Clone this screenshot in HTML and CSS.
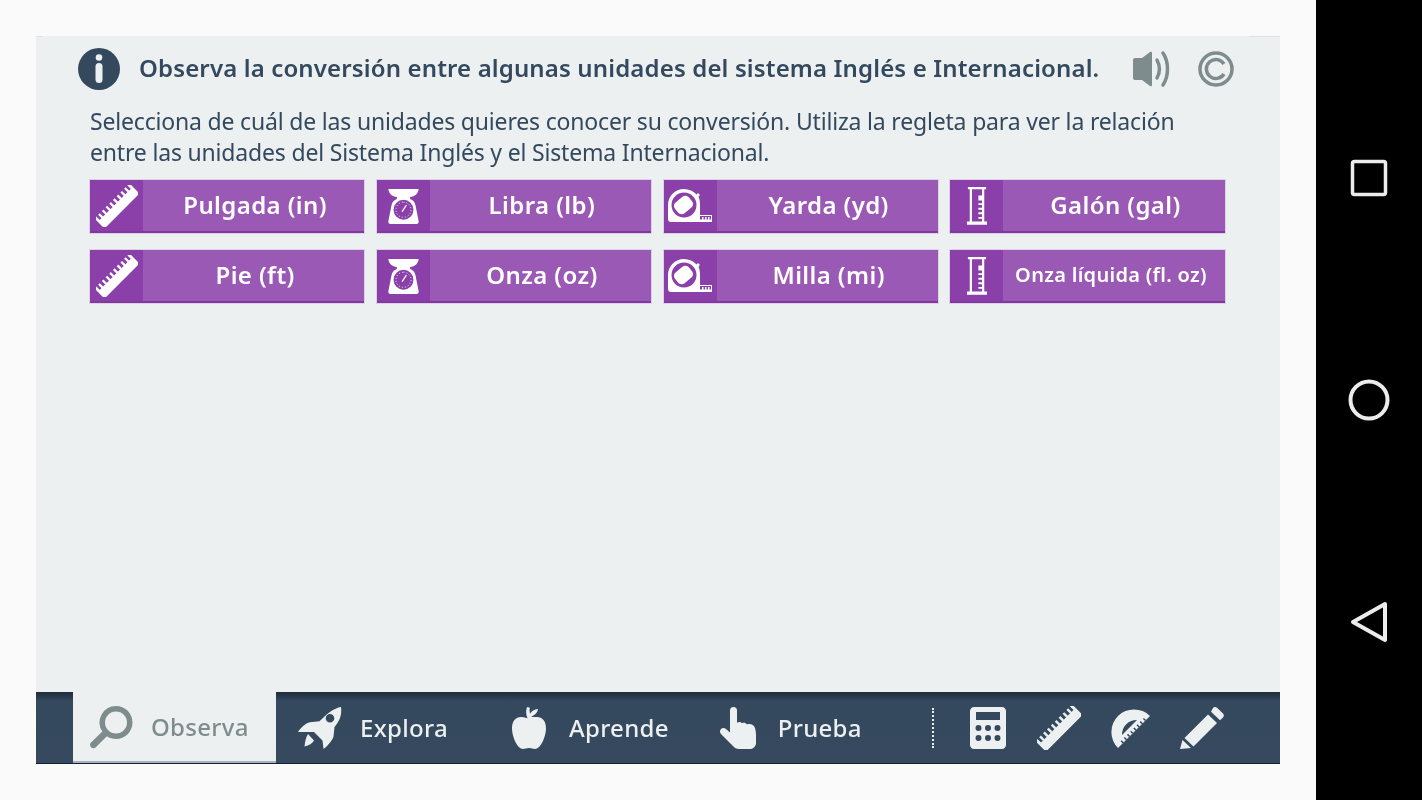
FILE: index.html
```html
<!DOCTYPE html>
<html lang="es">
<head>
<meta charset="utf-8">
<title>Observa</title>
<link rel="stylesheet" href="styles.css">
</head>
<body>
<svg class="defs" width="0" height="0" aria-hidden="true">
  <defs>
    <symbol id="ruler" viewBox="0 0 44 44">
      <g transform="rotate(-45 22 22)" fill="currentColor">
        <rect x="-4" y="19.500" width="52" height="10" rx="1"/>
        <rect x="-4" y="14.500" width="3" height="5.500"/><rect x="1.500" y="14.500" width="2.400" height="5.500"/>
        <rect x="7" y="14.500" width="2.400" height="5.500"/><rect x="12.500" y="14.500" width="2.400" height="5.500"/>
        <rect x="18" y="14.500" width="2.400" height="5.500"/><rect x="23.500" y="14.500" width="2.400" height="5.500"/>
        <rect x="29" y="14.500" width="2.400" height="5.500"/><rect x="34.500" y="14.500" width="2.400" height="5.500"/>
        <rect x="40" y="14.500" width="2.400" height="5.500"/><rect x="45" y="14.500" width="3" height="5.500"/>
      </g>
    </symbol>
    <symbol id="scale" viewBox="0 0 32 38">
      <path fill="currentColor" d="M0 1h32c-.6 5-4 8-9 8.500v2.200c3 1 5 3.200 5.600 6.300L32 35c.2 1.500-.6 3-2.500 3h-27C.6 38-.2 36.500 0 35l3.400-17c.6-3.100 2.600-5.300 5.600-6.300V9.500C4 9 .6 6 0 1z"/>
      <circle cx="16" cy="23" r="10.500" fill="#8a3fa9"/>
      <path fill="none" stroke="currentColor" stroke-width="1" stroke-dasharray="1 2.200" d="M16 15a8 8 0 1 1-.01 0z"/>
      <path fill="none" stroke="currentColor" stroke-width="1.300" d="M14.500 25l4.500-7"/>
    </symbol>
    <symbol id="tape" viewBox="0 0 44 34">
      <path fill="currentColor" fill-rule="evenodd" d="M16 0c5 0 9.500 2.200 12.500 5.500L30 4l2 2-1.500 1.500C31.500 10 32 13 32 16v10h12v7H3c-1.700 0-3-1.300-3-3V16C0 7 7 0 16 0zm0 3.500C9 3.500 3.500 9 3.500 16S9 28.500 16 28.500 28.500 23 28.500 16 23 3.500 16 3.500z"/>
      <rect x="6.500" y="9" width="18" height="14" rx="4.500" transform="rotate(-40 15.500 16)" fill="currentColor"/>
      <path fill="#8a3fa9" d="M32 27h11v3.500h-1.500V28h-1.500v2.500h-1.500V28H37v2.500h-1.500V28H34v2.500h-2z"/>
    </symbol>
    <symbol id="cylinder" viewBox="0 0 22 42">
      <path fill="currentColor" fill-rule="evenodd" d="M1 0h20v2.500h-2V38h3v3.500H0V38h3V2.500H1zm4.500 2.500V38h11v-3h-4v-2h4v-3h-4v-2h4v-3h-4v-2h4v-3h-4v-2h4v-3h-4V9.500h4V2.500z"/>
    </symbol>
    <symbol id="search" viewBox="0 0 44 44">
      <path fill="currentColor" fill-rule="evenodd" d="M27 1a16.500 16.500 0 0 1 0 33c-3.400 0-6.500-1-9.100-2.800L6.800 42.300c-1.300 1.300-3.500 1.300-4.800 0s-1.300-3.400 0-4.700l11.300-11A16.500 16.500 0 0 1 27 1zm0 5.500a11 11 0 1 0 0 22 11 11 0 0 0 0-22z"/>
    </symbol>
    <symbol id="rocket" viewBox="0 0 44 42">
      <path fill="currentColor" fill-rule="evenodd" d="M43 0c1 7-.8 13.500-6.500 20l-1 9.500c-.2 2-4.500 8.500-10 12.500l-1-8.500-8.500-8.500L0 25c4-6 9.500-9.500 12-9.700l9.500-1C28.500 7 36 1 43 0zM32 7a4.300 4.300 0 1 0 0 8.600A4.300 4.300 0 0 0 32 7z"/>
      <path fill="currentColor" d="M10 27l6 6.500c-1.500 3-5 5-9.500 6 .5-5 1.500-9.500 3.500-12.500z"/>
    </symbol>
    <symbol id="apple" viewBox="0 0 34 42">
      <path fill="currentColor" d="M15 0l3 .8c-.8 2.200-.5 4 .2 6 1-2.500 3.500-4.300 7.800-4.800-.4 3.400-2.800 6.400-7 7.400 1.500.4 3 .8 5 .6C30 9.500 34 14 34 21c0 9-5.500 21-11 21-2 0-3.500-1-6-1s-4 1-6 1C5.500 42 0 30 0 21c0-7 4-11.500 10-11 2 .2 3.500.6 5.500 1.200-1.600-3.500-1.800-7.200-.5-11.200z"/>
    </symbol>
    <symbol id="hand" viewBox="0 0 36 42">
      <path fill="currentColor" d="M10 3.500a3.500 3.500 0 0 1 7 0v12.200c1.800-1.200 3.800-1 5 .5 1.800-.8 3.800-.4 5 1.200 3.400-1 7 .5 8 3.600.6 2 1 5 1 7.500V36c0 3.300-2.700 6-6 6H19c-2.500 0-4.500-1-6-3L1 27c-1.500-1.500-1.300-3.700 0-5 1.400-1.400 3.500-1.400 5 0l4 3.500z"/>
    </symbol>
    <symbol id="calc" viewBox="0 0 36 42">
      <path fill="currentColor" fill-rule="evenodd" d="M4 0h28c2.200 0 4 1.800 4 4v34c0 2.200-1.800 4-4 4H4c-2.200 0-4-1.800-4-4V4c0-2.200 1.800-4 4-4zm2 5v8h24V5zm2.500 13a3 3 0 1 0 0 6 3 3 0 0 0 0-6zm9.500 0a3 3 0 1 0 0 6 3 3 0 0 0 0-6zm9.500 0a3 3 0 1 0 0 6 3 3 0 0 0 0-6zm-19 10a3 3 0 1 0 0 6 3 3 0 0 0 0-6zm9.500 0a3 3 0 1 0 0 6 3 3 0 0 0 0-6zm9.500 0a3 3 0 1 0 0 6 3 3 0 0 0 0-6z"/>
    </symbol>
    <symbol id="protractor" viewBox="0 0 42 42">
      <path fill="currentColor" fill-rule="evenodd" d="M41 9A22.600 22.600 0 0 0 9 41zM28 13A14.500 14.500 0 0 0 13 28z"/>
      <path fill="none" stroke="#36495f" stroke-width="3" stroke-dasharray="1.500 3" d="M36 12L12 36"/>
    </symbol>
    <symbol id="pencil" viewBox="0 0 44 42">
      <path fill="currentColor" d="M35 0c.8 0 1.500.3 2 .8l6 5.700c1.100 1 1.100 2.800 0 3.900l-3 2.900-9-8.600 2-3.800c.5-.6 1.200-.9 2-.9zM28 7.500l9 8.600L13.500 39.500l-9-8.600zM2.500 33L11 41 0 42z"/>
    </symbol>
  </defs>
</svg>

<main class="screen">
  <section class="panel">
    <div class="content">
      <header class="head">
        <svg class="info" viewBox="0 0 42 42" aria-hidden="true">
          <circle cx="21" cy="21" r="21" fill="#34495e"/>
          <circle cx="21" cy="9.500" r="3.300" fill="#ecf0f1"/>
          <rect x="17.500" y="15" width="7" height="20" rx="3.500" fill="#ecf0f1"/>
        </svg>
        <h1 class="title">Observa la conversión entre algunas unidades del sistema Inglés e Internacional.</h1>
        <svg class="sound" viewBox="0 0 38 36" aria-hidden="true">
          <path fill="currentColor" d="M0 9c0-1 .8-2 2-2h7l8-6c1-.7 2-.1 2 1v32c0 1.100-1 1.700-2 1l-8-6H2c-1.200 0-2-1-2-2z"/>
          <path fill="none" stroke="currentColor" stroke-width="3.500" stroke-linecap="round" d="M24 9c3 5.500 3 12.500 0 18"/>
          <path fill="none" stroke="currentColor" stroke-width="3.500" stroke-linecap="round" d="M30 2c6 9 6 23 0 32"/>
        </svg>
        <svg class="copy" viewBox="0 0 36 36" aria-hidden="true">
          <circle cx="18" cy="18" r="16" fill="none" stroke="currentColor" stroke-width="3.500"/>
          <path fill="none" stroke="currentColor" stroke-width="3.500" d="M26 13A9.500 9.500 0 1 0 26 23"/>
        </svg>
      </header>
      <p class="intro">Selecciona de cuál de las unidades quieres conocer su conversión. Utiliza la regleta para ver la relación entre las unidades del Sistema Inglés y el Sistema Internacional.</p>
      <div class="units">
        <button class="unit"><span class="unit-icon"><svg class="i-ruler"><use href="#ruler"/></svg></span><span class="unit-label">Pulgada (in)</span></button>
        <button class="unit"><span class="unit-icon"><svg class="i-scale"><use href="#scale"/></svg></span><span class="unit-label">Libra (lb)</span></button>
        <button class="unit"><span class="unit-icon"><svg class="i-tape"><use href="#tape"/></svg></span><span class="unit-label">Yarda (yd)</span></button>
        <button class="unit"><span class="unit-icon"><svg class="i-cyl"><use href="#cylinder"/></svg></span><span class="unit-label">Galón (gal)</span></button>
        <button class="unit"><span class="unit-icon"><svg class="i-ruler"><use href="#ruler"/></svg></span><span class="unit-label">Pie (ft)</span></button>
        <button class="unit"><span class="unit-icon"><svg class="i-scale"><use href="#scale"/></svg></span><span class="unit-label">Onza (oz)</span></button>
        <button class="unit"><span class="unit-icon"><svg class="i-tape"><use href="#tape"/></svg></span><span class="unit-label">Milla (mi)</span></button>
        <button class="unit"><span class="unit-icon"><svg class="i-cyl"><use href="#cylinder"/></svg></span><span class="unit-label unit-label-small">Onza líquida (fl. oz)</span></button>
      </div>
    </div>
    <nav class="tabs">
      <a class="tab tab-active"><svg class="t-search"><use href="#search"/></svg><span>Observa</span></a>
      <a class="tab tab-explora"><svg class="t-rocket"><use href="#rocket"/></svg><span>Explora</span></a>
      <a class="tab tab-aprende"><svg class="t-apple"><use href="#apple"/></svg><span>Aprende</span></a>
      <a class="tab tab-prueba"><svg class="t-hand"><use href="#hand"/></svg><span>Prueba</span></a>
      <span class="divider"></span>
      <div class="tools">
        <svg class="t-calc"><use href="#calc"/></svg>
        <svg class="t-ruler"><use href="#ruler"/></svg>
        <svg class="t-prot"><use href="#protractor"/></svg>
        <svg class="t-pencil"><use href="#pencil"/></svg>
      </div>
    </nav>
  </section>
</main>

<aside class="navbar">
  <svg class="nav-icon" viewBox="0 0 40 40" aria-hidden="true"><rect x="3.500" y="3.500" width="33" height="33" rx="2" fill="none" stroke="#ececec" stroke-width="3.500"/></svg>
  <svg class="nav-icon" viewBox="0 0 40 40" aria-hidden="true"><circle cx="20" cy="20" r="18.500" fill="none" stroke="#ececec" stroke-width="4"/></svg>
  <svg class="nav-icon" viewBox="0 0 40 40" aria-hidden="true"><path d="M36 2L4 20l32 18z" fill="none" stroke="#ececec" stroke-width="4" stroke-linejoin="round"/></svg>
</aside>
</body>
</html>
```

FILE: styles.css
```css
* { box-sizing: border-box; }
html, body { margin: 0; height: 100%; }
body {
  display: flex;
  width: 1422px;
  height: 800px;
  overflow: hidden;
  background: #fafafa;
  font-family: "Noto Sans", "Open Sans", sans-serif;
  color: #34495e;
}
.defs { position: absolute; }
.screen { width: 1316px; padding: 36px; display: flex; }
.panel { flex: 1; min-width: 0; position: relative; display: flex; flex-direction: column; background: #ecf0f1; filter: blur(0.35px); }
.panel::before, .panel::after { content: ""; position: absolute; top: 0; height: 1px; background: #dde1e3; }
.panel::before { left: 0; width: 6px; }
.panel::after { right: 0; width: 31px; }
.content { flex: 1; padding: 11px 46px 0 42px; }

.head { display: flex; align-items: center; height: 43px; }
.info { width: 42px; height: 42px; flex: none; }
.title { margin: -2px 0 0 19px; font-size: 24px; font-weight: 600; white-space: nowrap; width: 960px; letter-spacing: 0.14px; }
.sound { width: 38px; height: 36px; margin-left: 34px; color: #7f8c8d; flex: none; }
.copy { width: 36px; height: 36px; margin-left: 27px; color: #7f8c8d; flex: none; }

.intro { margin: 16px 0 12px 12px; width: 1100px; font-size: 23px; line-height: 31px; letter-spacing: -0.18px; color: #34495e; }

.units {
  display: grid;
  grid-template-columns: repeat(4, 274.2px);
  grid-auto-rows: 53px;
  column-gap: 12.600px;
  row-gap: 17px;
  margin-left: 12px;
}
.unit {
  display: flex;
  padding: 0;
  border: 0;
  border-bottom: 2px solid #8436a4;
  background: #9a59b4;
  color: #fff;
  font: inherit;
  box-shadow: 0 0 0 1px rgba(154, 89, 180, 0.2);
}
.unit-icon { width: 53px; display: flex; align-items: center; justify-content: center; background: #8a3fa9; flex: none; }
.unit-label { flex: 1; display: flex; align-items: center; justify-content: center; font-size: 24px; font-weight: 600; letter-spacing: 0.4px; padding: 0 0 3px 3px; }
.unit-label-small { font-size: 20px; letter-spacing: 0.3px; padding: 0 6px 3px 0; }
.i-ruler { width: 42px; height: 42px; }
.i-scale { width: 31px; height: 36px; }
.i-tape { width: 44px; height: 34px; }
.i-cyl { width: 20px; height: 42px; }

.tabs {
  height: 72px;
  flex: none;
  display: flex;
  align-items: center;
  padding-left: 37px;
  background: linear-gradient(#1f2d3b 0, #34485e 9px, #36495f 100%);
  border-bottom: 1px solid #0e2138;
  color: #ecf0f1;
  font-size: 24px;
  font-weight: 500;
  letter-spacing: 0.3px;
}
.tab { display: flex; align-items: center; height: 100%; }
.tab svg { flex: none; }
.tab-active { width: 203px; padding-left: 16px; gap: 18px; background: #ecf0f1; color: #7f8c8d; border-bottom: 2px solid #aab2b5; }
.t-search { width: 44px; height: 44px; }
.tab-explora { margin-left: 22px; gap: 18px; }
.t-rocket { width: 44px; height: 42px; }
.tab-aprende { margin-left: 64px; gap: 23px; }
.t-apple { width: 34px; height: 42px; }
.tab-prueba { margin-left: 51px; gap: 22px; }
.t-hand { width: 36px; height: 42px; }
.divider { margin-left: 70px; height: 40px; border-left: 2px dotted #ecf0f1; }
.tools { display: flex; align-items: center; margin-left: 36px; }
.t-calc { width: 36px; height: 42px; }
.t-ruler { width: 44px; height: 44px; margin-left: 31px; }
.t-prot { width: 42px; height: 42px; margin-left: 28px; }
.t-pencil { width: 44px; height: 42px; margin-left: 29px; }

.navbar { width: 106px; flex: none; background: #000; display: flex; flex-direction: column; align-items: center; padding: 158px 0; justify-content: space-between; }
.nav-icon { width: 40px; height: 40px; overflow: visible; }
```
